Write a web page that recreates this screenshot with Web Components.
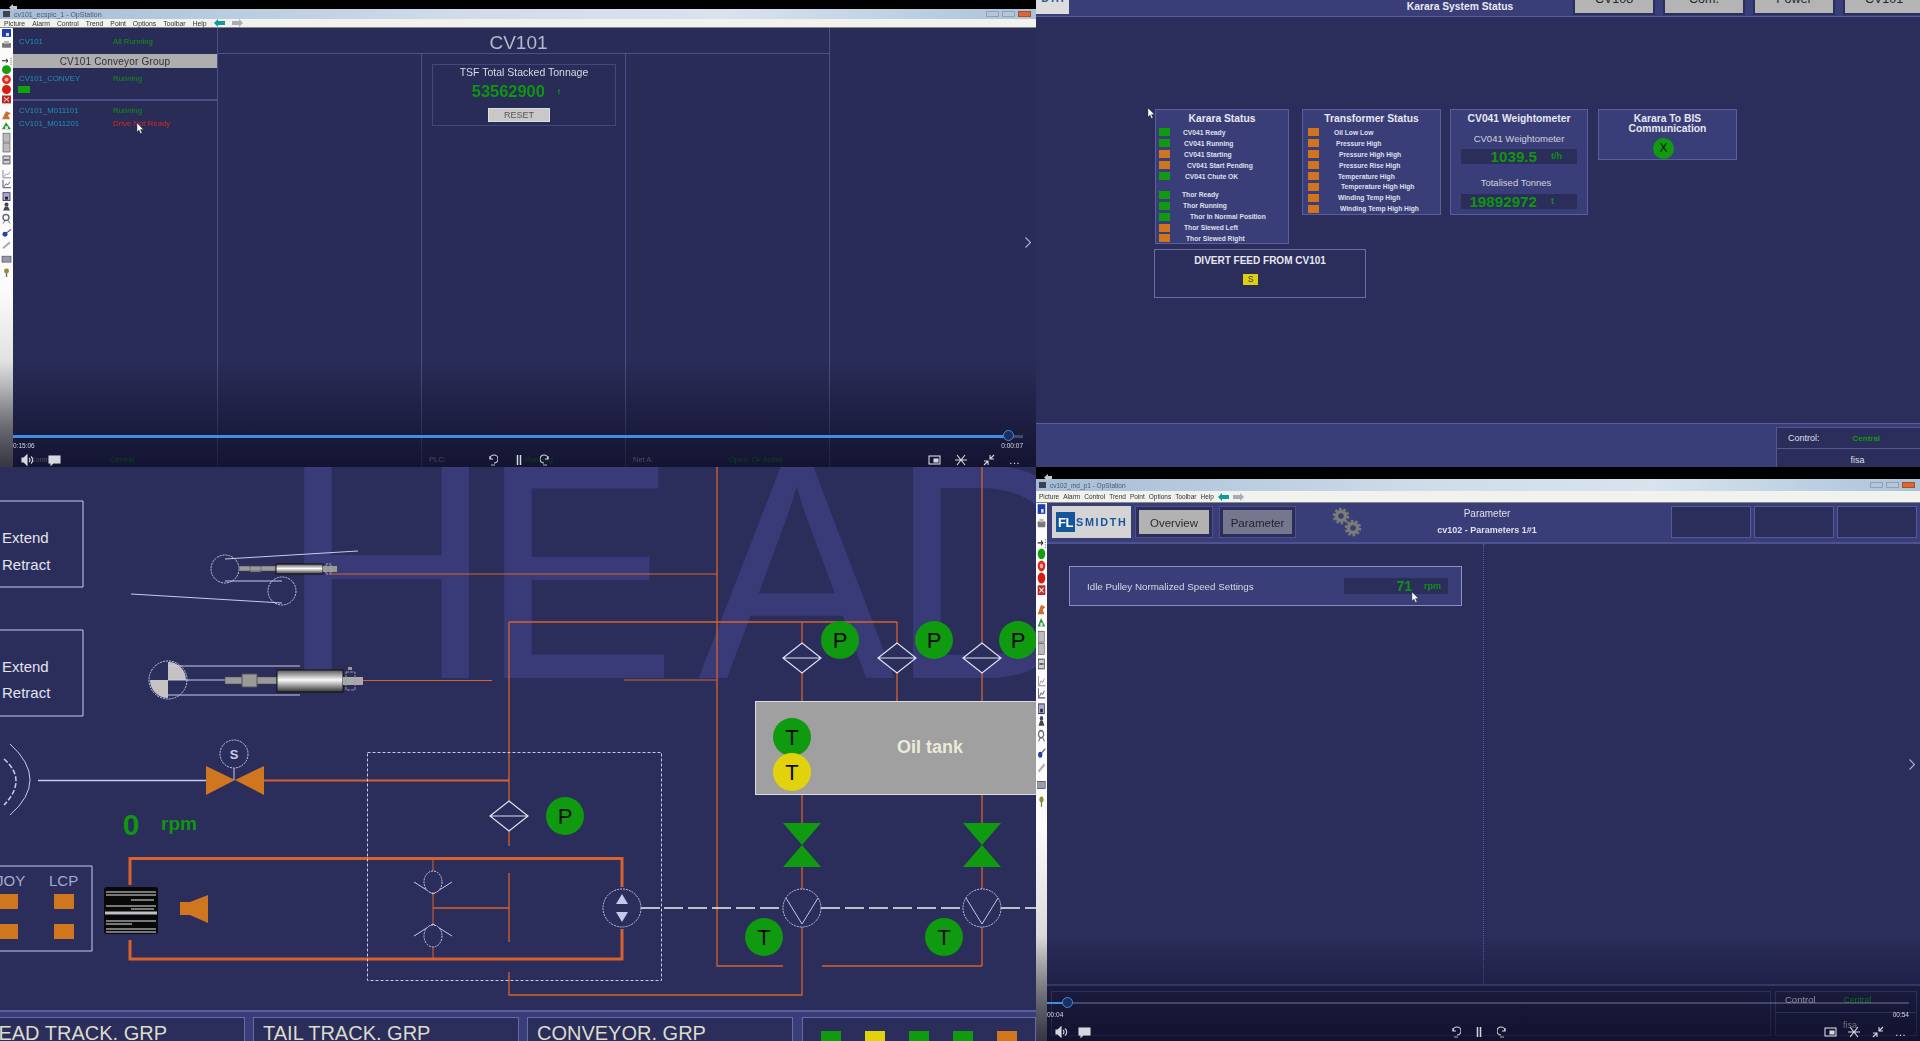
<!DOCTYPE html>
<html lang="en">
<head>
<meta charset="utf-8">
<title>OpStation</title>
<style>
  html, body { margin: 0; background: #000; overflow: hidden; }
  body { font-family: "Liberation Sans", Arial, sans-serif; }
</style>
</head>
<body>
<op-wall>
  <!-- top left -->
  <op-window title-text="cv101_ecspic_1 - OpStation" scale="1" menu-gap="7">
    <cv-overview></cv-overview>
    <video-bar slot="over" seek="996" start="0:15:06" end="0:00:07" inset="13" pad="16" wide></video-bar>
    <pointer-mark slot="over" style="left:137px;top:123px"></pointer-mark>
  </op-window>

  <!-- top right -->
  <karara-status></karara-status>

  <!-- bottom left -->
  <head-diagram></head-diagram>

  <!-- bottom right -->
  <op-window title-text="cv102_md_p1 - OpStation" scale="1.22" menu-gap="4">
    <cv-parameter></cv-parameter>
    <video-bar slot="over" seek="21" start="00:04" end="00:54" inset="11" pad="14"></video-bar>
    <pointer-mark slot="over" style="left:376px;top:125px"></pointer-mark>
  </op-window>
</op-wall>

<script>
const BASE = `:host{font-family:"Liberation Sans",Arial,sans-serif;box-sizing:border-box}*{box-sizing:border-box}`;

class OpWall extends HTMLElement {
  connectedCallback() {
    const root = this.attachShadow({ mode: "open" });
    root.innerHTML = `<style>
      :host{display:grid;grid-template-columns:1036px 884px;grid-template-rows:467px 574px;width:1920px;height:1041px;overflow:hidden}
      ::slotted(*){min-width:0;min-height:0}
    </style><slot></slot>`;
  }
}

class PointerMark extends HTMLElement {
  connectedCallback() {
    const root = this.attachShadow({ mode: "open" });
    root.innerHTML = `<style>:host{position:absolute;display:block;width:7px;height:11px}svg{display:block}</style>
      <svg width="7" height="11" viewBox="0 0 7 11"><path d="M0 0v9l2-2 1.500 3.500 1.500-.6L3.500 6.500H6.500z" fill="#fff" stroke="#222" stroke-width=".4"/></svg>`;
  }
}

// side strip of small OpStation tool icons, page y is stretched by the viewBox
const TOOL_ICONS = `
  <rect x="2" y="1" width="9" height="8" fill="#1c3fb0"/><rect x="6" y="5" width="3" height="3" fill="#ddd"/>
  <rect x="2" y="15" width="9" height="5" rx="1" fill="#777"/><rect x="4" y="13" width="5" height="3" fill="#bbb"/>
  <path d="M2 33h6M6 31l2 2-2 2" stroke="#222" fill="none"/><path d="M11 30v7" stroke="#555" stroke-dasharray="1 1"/>
  <circle cx="6.500" cy="42" r="4.500" fill="#12a012"/><circle cx="6.500" cy="52" r="4.500" fill="#e02c1c"/><circle cx="6.500" cy="52" r="2" fill="#f3b0a0"/>
  <circle cx="6.500" cy="62" r="4.500" fill="#d81c10"/><rect x="2" y="68" width="9" height="8" fill="#c02828"/><path d="M4 70l5 4M9 70l-5 4" stroke="#eee"/>
  <path d="M2 92l4-8 5 2-3 2 2 4z" fill="#c8702c"/><path d="M2 102l4-7 5 7z" fill="#2c9a3c"/><rect x="5" y="99" width="3" height="3" fill="#ddd"/>
  <rect x="3" y="106" width="7" height="9" fill="#bbb" stroke="#555" stroke-width=".6"/><rect x="3" y="116" width="7" height="9" fill="#bbb" stroke="#555" stroke-width=".6"/>
  <rect x="3" y="129" width="7" height="8" fill="#ccd" stroke="#444" stroke-width=".8"/><path d="M4 133h5" stroke="#222"/>
  <path d="M3 143v8h8" fill="none" stroke="#889"/><path d="M4 150l2-3 2 1 2-3" fill="none" stroke="#b9b"/>
  <path d="M3 153v8h8" fill="none" stroke="#556"/><path d="M4 160l2-3 2 1 2-3" fill="none" stroke="#669"/>
  <rect x="3" y="166" width="7" height="8" fill="#aac" stroke="#334" stroke-width=".8"/><rect x="5" y="170" width="3" height="3" fill="#224"/>
  <circle cx="6.500" cy="178" r="2" fill="#445"/><path d="M3 184l2-4h3l2 4z" fill="#445"/>
  <circle cx="6" cy="191" r="3" fill="none" stroke="#667" stroke-width="1.400"/><path d="M3 197l2-3M10 197l-2-3" stroke="#667"/>
  <circle cx="5" cy="208" r="2.500" fill="#1c3fb0"/><path d="M6 207l5-4" stroke="#555" stroke-width="1.200"/>
  <path d="M3 222l7-6" stroke="#aaa" stroke-width="2"/><rect x="2" y="230" width="9" height="6" fill="#99a" stroke="#445" stroke-width=".6"/>
  <circle cx="6.500" cy="245" r="2.500" fill="#998a30"/><path d="M6.500 247v4" stroke="#776" stroke-width="1.500"/>`;

class OpWindow extends HTMLElement {
  connectedCallback() {
    const scale = Number(this.getAttribute("scale"));
    const title = this.getAttribute("title-text");
    const gap = this.getAttribute("menu-gap");
    const small = scale > 1;
    const items = ["Picture", "Alarm", "Control", "Trend", "Point", "Options", "Toolbar", "Help"]
      .map((m) => `<span>${m}</span>`).join("");
    const root = this.attachShadow({ mode: "open" });
    root.innerHTML = `<style>${BASE}
      :host{display:flex;flex-direction:column;position:relative;overflow:hidden;background:#000;filter:blur(.35px)}
      .black{height:${small ? 12 : 9}px;background:#000;flex:none;padding:${small ? 7 : 4}px 0 0 ${small ? 8 : 9}px}
      .black svg{display:block;position:relative;z-index:2}
      .title{height:${small ? 12 : 10}px;flex:none;background:linear-gradient(90deg,#a4bcd6,#d0dcea 45%,#d8e3ee 70%,#a9c2da);display:flex;align-items:center;padding-left:3px;gap:4px;font-size:${small ? 6.500 : 7}px;color:#4a5a70}
      .title i{display:block;width:7px;height:6px;background:#3c4250;flex:none}
      .winbtn{margin-left:auto;display:flex;gap:3px;padding-right:5px}
      .winbtn b{display:block;width:13px;height:6px;background:#b7c6d6;border:1px solid #8ea2b8}
      .winbtn b:last-child{background:#d8683a;border-color:#b84a20}
      .menu{height:${small ? 12 : 9}px;flex:none;background:#f1f1ed;border-bottom:1px solid #888;display:flex;align-items:center;gap:${gap}px;padding-left:${small ? 3 : 4}px;font-size:${small ? 6.500 : 6.800}px;color:#333}
      .work{flex:1;display:flex;min-height:0}
      .tools{width:${small ? 11 : 13}px;flex:none;background:linear-gradient(#fbfbfb 60%,#d8d8d8 82%,#8e8e8e)}
      .tools svg{display:block;width:100%;height:${Math.round(250 * scale)}px}
      .main{flex:1;min-width:0;display:flex}
      ::slotted(cv-overview),::slotted(cv-parameter){flex:1}
    </style>
    <div class="black"><svg width="8" height="7" viewBox="0 0 8 7"><path d="M4 0L0 3.500L4 7V5H8V2H4z" fill="#c8c8c8"/></svg></div>
    <div class="title"><i></i><span>${title}</span><div class="winbtn"><b></b><b></b><b></b></div></div>
    <div class="menu">${items}
      <svg width="11" height="8" viewBox="0 0 11 8"><path d="M0 4l4-4v2h7v4H4v2z" fill="#109aa0"/></svg>
      <svg width="11" height="8" viewBox="0 0 11 8"><path d="M11 4L7 0v2H0v4h7v2z" fill="#aab"/></svg>
    </div>
    <div class="work">
      <div class="tools"><svg viewBox="0 0 13 252" preserveAspectRatio="none">${TOOL_ICONS}</svg></div>
      <div class="main"><slot></slot></div>
    </div>
    <slot name="over"></slot>`;
  }
}

class VideoBar extends HTMLElement {
  connectedCallback() {
    const seek = this.getAttribute("seek");
    const inset = this.getAttribute("inset");
    const pad = this.getAttribute("pad");
    const wide = this.hasAttribute("wide");
    const icon = (d, w = 16) => `<svg width="${w}" height="12" viewBox="0 0 ${w} 12" fill="none" stroke="#d6d8e0" stroke-width="1.100">${d}</svg>`;
    const root = this.attachShadow({ mode: "open" });
    root.innerHTML = `<style>${BASE}
      :host{position:absolute;inset:0;display:flex;flex-direction:column;justify-content:flex-end;pointer-events:none;color:#dde}
      .chev{position:absolute;right:5px;top:calc(50% + ${wide ? 3 : 5}px)}
      .scrim{background:linear-gradient(rgba(8,8,30,0),rgba(8,8,30,.38) 55%,rgba(8,8,30,.66));height:106px;display:flex;flex-direction:column;justify-content:flex-end;padding:0 ${inset}px ${wide ? 0 : 2}px}
      .line{position:relative;height:${wide ? 3 : 2}px;background:rgba(190,190,220,.28);margin-bottom:${wide ? 4 : 7}px}
      .line b{position:absolute;left:0;top:0;bottom:0;width:${seek}px;background:#3f8fdc}
      .line i{position:absolute;left:${seek}px;top:-5px;width:11px;height:11px;border-radius:50%;border:1.500px solid #3f8fdc;background:#1c2f60;margin-left:-6px}
      .time{display:flex;justify-content:space-between;font-size:6.500px;margin-bottom:${wide ? 3 : 6}px;color:#d6d8e0}
      .row{display:grid;grid-template-columns:1fr auto 1fr;align-items:center;height:15px;padding:0 ${pad - inset}px 0 ${pad - inset + 5}px}
      .grp{display:flex;align-items:center;gap:${wide ? 14 : 10}px}
      .c{gap:${wide ? 18 : 15}px;padding-right:4px}.r{justify-content:flex-end;gap:${wide ? 13.500 : 10}px}
    </style>
    <svg class="chev" width="6" height="11" viewBox="0 0 6 11"><path d="M.5.5l5 5-5 5" fill="none" stroke="#b0b2d0" stroke-width="1.100"/></svg>
    <div class="scrim">
      <div class="line"><b></b><i></i></div>
      <div class="time"><span>${this.getAttribute("start")}</span><span>${this.getAttribute("end")}</span></div>
      <div class="row">
        <div class="grp">
          ${icon('<path d="M1 4h2l3-3v10L3 8H1z" fill="#d6d8e0"/><path d="M8 4q2 2 0 4M10 2.500q3.500 3.500 0 7"/>', 13)}
          ${icon('<rect x="1" y="2" width="11" height="7" fill="#d6d8e0"/><path d="M3 9v2l2-2" fill="#d6d8e0"/>', 13)}
        </div>
        <div class="grp c">
          ${icon('<path d="M3 5a4 4 0 1 1 4 4"/><path d="M3 2v3h3"/><path d="M5 10v2M7 10v2" stroke-width=".8"/>', 11)}
          ${icon('<path d="M1.500 1v10M4.500 1v10" stroke-width="1.500"/>', 6)}
          ${icon('<path d="M8 5a4 4 0 1 0-4 4"/><path d="M8 2v3H5"/><path d="M4 10v2M6 10v2" stroke-width=".8"/>', 11)}
        </div>
        <div class="grp r">
          ${icon('<rect x="1" y="2" width="11" height="8"/><rect x="6" y="5" width="4" height="3" fill="#d6d8e0"/>', 13)}
          ${icon('<path d="M3 1l4 5 4-5M3 11l4-5 4 5M1 6h12"/>', 14)}
          ${icon('<path d="M2 11l4-4M12 1L8 5M2 7h4v4M8 1v4h4"/>', 14)}
          <span style="font-size:11px;line-height:8px;letter-spacing:.5px">...</span>
        </div>
      </div>
    </div>`;
  }
}

class CvOverview extends HTMLElement {
  connectedCallback() {
    const row = (a, b, c = "#0f950f") => `<div class="row"><span class="tag">${a}</span><span style="color:${c}">${b}</span></div>`;
    const root = this.attachShadow({ mode: "open" });
    root.innerHTML = `<style>${BASE}
      :host{display:flex;background:#2a2c58;min-width:0}
      .side{width:205px;flex:none;border-right:1px solid #4c4f8a;display:flex;flex-direction:column}
      .row{display:grid;grid-template-columns:94px 1fr;font-size:7.800px;padding-left:6px;height:13px;align-items:center}
      .tag{color:#1e8fb8}
      .head{height:26px;display:flex;align-items:center}
      .head .row{width:100%;height:auto}
      .bar{height:14px;background:#aeaeae;color:#303038;font-size:10px;text-align:center;line-height:15px;letter-spacing:.2px}
      .grp{height:33px;border-bottom:2px solid #4c4f8a;padding-top:4px}
      .grp i{display:block;width:12px;height:7px;background:#10a010;margin:1px 0 0 5px}
      .lst{padding-top:3px;flex:1}
      .foot,.cell{height:15px;font-size:7.500px;display:grid;align-items:center;color:#b0b2c8}
      .foot{grid-template-columns:80px 1fr;padding-left:17px}
      .right{flex:1;display:grid;grid-template-columns:204px 204px 204px 1fr;grid-template-rows:26px 1fr 15px;min-width:0}
      .title{grid-column:1/span 3;border-bottom:1px solid #4c4f8a;border-right:1px solid #4c4f8a;color:#b4b8c8;font-size:19px;text-align:center;line-height:30px;padding-right:10px}
      .col{border-right:1px solid #4c4f8a;min-height:0}
      .cell{border-right:1px solid #4c4f8a;grid-template-columns:96px 1fr;padding-left:7px}
      .g{color:#0f950f}
      .tsf{margin:10px 0 0 10px;width:184px;height:62px;border:1px solid #44477f;display:flex;flex-direction:column;align-items:center;color:#d8dae4;padding-right:10px}
      .tsf h4{margin:1px 0 0;font-weight:400;font-size:10.500px;line-height:12px;padding-left:10px}
      .num{display:flex;align-items:center;height:24px;margin-top:1px;color:#0f950f;font-weight:700;font-size:16.400px;gap:13px;padding-right:6px}
      .num small{font-size:7px;font-weight:700}
      button{font:9px "Liberation Sans",Arial,sans-serif;color:#555;background:#c8c8c8;border:1px solid #ddd;width:62px;height:14px;padding:0;margin-top:5px}
    </style>
    <div class="side">
      <div class="head">${row("CV101", "All Running")}</div>
      <div class="bar">CV101 Conveyor Group</div>
      <div class="grp">${row("CV101_CONVEY", "Running")}<i></i></div>
      <div class="lst">${row("CV101_M011101", "Running")}${row("CV101_M011201", "Drive Not Ready", "#d42820")}</div>
      <div class="foot"><span>Control:</span><span class="g">Central</span></div>
    </div>
    <div class="right">
      <div class="title">CV101</div>
      <div></div>
      <div class="col"></div>
      <div class="col"><div class="tsf"><h4>TSF Total Stacked Tonnage</h4>
        <div class="num"><span>53562900</span><small>t</small></div><button>RESET</button></div></div>
      <div class="col"></div>
      <div></div>
      <div class="cell"></div>
      <div class="cell"><span>PLC:</span><span class="g">Running</span></div>
      <div class="cell"><span>Net A:</span><span class="g">Open: Ok Active</span></div>
      <div></div>
    </div>`;
  }
}

class StatusRow extends HTMLElement {
  connectedCallback() {
    const root = this.attachShadow({ mode: "open" });
    const c = this.getAttribute("c") === "g" ? "#0f9a0f" : "#cf741f";
    root.innerHTML = `<style>${BASE}
      :host{display:flex;align-items:center;height:10.900px;font-size:6.700px;font-weight:700;color:#dfe0ea;white-space:nowrap}
      i{display:block;width:11px;height:8px;background:${c};flex:none}
      span{padding-left:${this.getAttribute("x")}px}
    </style><i></i><span><slot></slot></span>`;
  }
}

class HmiPanel extends HTMLElement {
  connectedCallback() {
    const root = this.attachShadow({ mode: "open" });
    root.innerHTML = `<style>${BASE}
      :host{display:block;background:#3a3e78;border:1px solid #5a5e9c;color:#e6e7ef;flex:none}
      h3{margin:0;text-align:center;font-size:10.300px;line-height:9.500px;font-weight:700;padding-top:4px}
    </style><h3>${this.getAttribute("heading")}</h3><slot></slot>`;
  }
}

class KararaStatus extends HTMLElement {
  connectedCallback() {
    const root = this.attachShadow({ mode: "open" });
    const rows = (list) => list.map(([c, x, t]) => t ? `<status-row c="${c}" x="${x}">${t}</status-row>` : `<div style="height:8px"></div>`).join("");
    root.innerHTML = `<style>${BASE}
      :host{display:flex;flex-direction:column;background:#2b2d5b;overflow:hidden;position:relative}
      .bar{height:17px;flex:none;background:#3a3e78;border-bottom:1px solid #585c9a;display:flex;align-items:flex-end;overflow:hidden;padding-bottom:3px}
      .logo{width:33px;height:14px;align-self:flex-start;background:#dcdcdc;overflow:hidden;display:flex;align-items:flex-end;justify-content:center;color:#1a5fa0;font-weight:700;font-size:11px;line-height:11px;padding-bottom:10px;flex:none}
      .ttl{flex:1;text-align:center;color:#e8e8f0;font-size:10.300px;font-weight:700;line-height:13px;align-self:center;margin-top:0;padding-left:276px;white-space:nowrap}
      .btns{width:345px;flex:none;display:flex;gap:12px}
      .btns b{flex:none;width:78px;height:22px;background:#b4b4b4;outline:2px solid #2c2e5e;color:#26262e;font-weight:400;font-size:12.500px;overflow:hidden;display:flex;align-items:flex-end;justify-content:center;line-height:12px;padding-bottom:8px}
      .desk{flex:1;padding:92px 0 0 119px;display:flex;flex-direction:column;gap:5px}
      .line{display:flex;align-items:flex-start}
      .karara{width:134px;height:135px;margin-right:13px}
      .trafo{width:139px;height:106px;margin-right:9px}
      .weigh{width:138px;height:106px;margin-right:10px}
      .bis{width:139px;height:51px}
      .list{padding:3.500px 0 0 3px}
      .trafo .list{padding-left:5px}
      .sub{font-size:9.500px;text-align:center;line-height:12px;color:#d0d2de;font-weight:400}
      .read{margin:4px 10px 0;height:15px;background:#2b2d5b;display:flex;align-items:center;color:#0f950f;font-weight:700;font-size:15.200px}
      .read b{width:76px;text-align:right;flex:none}
      .read small{font-size:9px;padding-left:14px;font-weight:700;color:#10901a}
      .dot{width:21px;height:21px;border-radius:50%;background:#0f9a0f;color:#111;margin:5px 0 0 54px;font-size:12px;line-height:21px;text-align:center}
      .divert{width:212px;height:49px;background:#2b2d5b;border:1px solid #6a6da6;margin-left:-1px;color:#e8e8f0;font-weight:700;font-size:10px;text-align:center;padding-top:5px;line-height:12px}
      .s{width:15px;height:11px;background:#e0cf10;color:#44401a;font-size:8.500px;line-height:11px;font-weight:400;margin:7px 0 0 88px;text-align:center}
      .foot{height:44px;flex:none;background:#3a3e78;border-top:1px solid #585c9a;display:flex;justify-content:flex-end;padding-top:3px}
      .ctl{width:144px;background:#2b2d5b;border:1px solid #555890;border-right:0;border-bottom:0;font-size:9px;color:#dfe0ea}
      .ctl div{height:21px;display:flex;align-items:center;padding-left:11px;border-bottom:1px solid #555890}
      .ctl em{font-style:normal;color:#0f9a0f;font-size:8px;font-weight:700;padding-left:33px}
      .ctl p{margin:0;text-align:center;line-height:22px;font-weight:400;padding-left:18px}
    </style>
    <div class="bar">
      <div class="logo">DTH</div>
      <div class="ttl">Karara System Status</div>
      <div class="btns"><b>CV108</b><b>Com.</b><b>Power</b><b>CV101</b></div>
    </div>
    <div class="desk">
      <div class="line">
        <hmi-panel class="karara" heading="Karara Status"><div class="list">${rows([
          ["g", 13, "CV041 Ready"], ["g", 14, "CV041 Running"], ["o", 14, "CV041 Starting"], ["o", 17, "CV041 Start Pending"], ["g", 15, "CV041 Chute OK"], [],
          ["g", 12, "Thor Ready"], ["g", 13, "Thor Running"], ["g", 20, "Thor In Normal Position"], ["o", 14, "Thor Slewed Left"], ["o", 16, "Thor Slewed Right"]])}</div></hmi-panel>
        <hmi-panel class="trafo" heading="Transformer Status"><div class="list">${rows([
          ["o", 15, "Oil Low Low"], ["o", 17, "Pressure High"], ["o", 20, "Pressure High High"], ["o", 20, "Pressure Rise High"], ["o", 19, "Temperature High"],
          ["o", 22, "Temperature High High"], ["o", 19, "Winding Temp High"], ["o", 21, "Winding Temp High High"]])}</div></hmi-panel>
        <hmi-panel class="weigh" heading="CV041 Weightometer">
          <div class="sub" style="padding-top:9px">CV041 Weightometer</div>
          <div class="read"><b>1039.5</b><small>t/h</small></div>
          <div class="sub" style="padding-top:13px;padding-right:6px">Totalised Tonnes</div>
          <div class="read" style="margin-top:5px"><b>19892972</b><small>t</small></div>
        </hmi-panel>
        <hmi-panel class="bis" heading="Karara To BIS<br>Communication"><div class="dot">X</div></hmi-panel>
      </div>
      <div class="divert">DIVERT FEED FROM CV101<div class="s">S</div></div>
    </div>
    <div class="foot"><div class="ctl"><div><span>Control:</span><em>Central</em></div><p>fisa</p></div></div>
    <pointer-mark style="left:112px;top:108px"></pointer-mark>`;
  }
}

// hydraulic schematic: nodes sit at their own place on the canvas
const pin = (x, y, l, fill = "#0f9a0f") => `<circle cx="${x}" cy="${y}" r="19" fill="${fill}"/><text x="${x}" y="${y + 8}" text-anchor="middle" font-size="22" fill="#0b0b0b">${l}</text>`;
const filter = (x, y) => `<path d="M${x - 19} ${y}L${x} ${y - 15}L${x + 19} ${y}L${x} ${y + 15}Z M${x - 19} ${y}H${x + 19}" fill="#2b2d5b" stroke="#dfe0f4" stroke-width="1.200"/>`;
const hourglass = (x) => `<path d="M${x - 19} 824H${x + 19}L${x} 846L${x + 19} 868H${x - 19}L${x} 846Z" fill="#0f9a0f"/>`;
const pumpV = (x) => `<circle cx="${x}" cy="909" r="19" fill="#2b2d5b" stroke="#c4c6e8" stroke-dasharray="2 1"/><path d="M${x - 16} 899L${x} 925L${x + 16} 899" fill="none" stroke="#c4c6e8"/>`;

class HeadDiagram extends HTMLElement {
  connectedCallback() {
    const root = this.attachShadow({ mode: "open" });
    const or = `fill="none" stroke="#d8622e"`;
    const wh = `fill="none" stroke="#c9cbea"`;
    root.innerHTML = `<style>${BASE}
      :host{display:flex;flex-direction:column;background:#2b2d5b;overflow:hidden}
      svg{display:block;flex:none;font-family:"Liberation Sans",Arial,sans-serif}
      .foot{height:31px;flex:none;background:#3a3e78;border-top:2px solid #5a5e9c;display:flex;gap:8px;padding-top:5px;overflow:hidden}
      .t{flex:none;background:#2b2d5b;border:1px solid #666aa8;border-bottom:0;height:30px;font-size:20px;line-height:24px;color:#dcdccc;padding:3px 0 0 9px;white-space:nowrap}
      .sq{display:flex;gap:24px;padding:13px 0 0 18px;width:234px;margin-left:1px}
      .sq i{display:block;flex:none;width:20px;height:20px}
    </style>
    <svg width="1036" height="543" viewBox="0 468 1036 543">
      <defs>
        <linearGradient id="steel" x1="0" y1="0" x2="0" y2="1"><stop offset="0" stop-color="#555"/><stop offset=".45" stop-color="#fafafa"/><stop offset="1" stop-color="#333"/></linearGradient>
      </defs>
      <text transform="translate(0 679) scale(1 1.05) translate(0 -679)" y="679" x="280 480 698 889" font-size="295" fill="#383b77">HEAD</text>

      <path d="M-2 502H83V588H-2M-2 631H83V717H-2" ${wh} stroke="#8d90c4"/>
      <g fill="#e4e4ee" font-size="15"><text x="2" y="544">Extend</text><text x="2" y="571">Retract</text><text x="2" y="673">Extend</text><text x="2" y="699">Retract</text></g>

      <g ${wh}><circle cx="225" cy="570" r="14" stroke-dasharray="2 1"/><circle cx="282" cy="592" r="14" stroke-dasharray="2 1"/>
        <path d="M225 560L358 552M225 582H282M131 595L282 604"/></g>
      <path d="M239 567h37v5h-37zM250 567h11v6h-11z" fill="#9a9a9a" stroke="#444" stroke-width=".5"/>
      <rect x="276" y="565" width="47" height="10" fill="url(#steel)" stroke="#111"/>
      <rect x="323" y="567" width="14" height="6" fill="#999"/><rect x="326" y="565" width="5" height="10" fill="none" stroke="#aaa" stroke-dasharray="2 1"/>
      <path d="M330 575H717" ${or}/>

      <circle cx="168" cy="681" r="19" ${wh} stroke-dasharray="2 1"/>
      <path d="M168 681V663A18 18 0 0 1 186 681ZM168 681V699A18 18 0 0 1 150 681Z" fill="#c3c3c3"/>
      <path d="M168 667H300M168 681H225M168 696H300" ${wh}/>
      <path d="M225 678h52v7h-52z" fill="#9a9a9a" stroke="#444" stroke-width=".5"/><path d="M242 675h15v13h-15z" fill="#9a9a9a" stroke="#555"/>
      <rect x="277" y="671" width="66" height="22" fill="url(#steel)" stroke="#111"/>
      <rect x="343" y="678" width="20" height="8" fill="#aaa"/><rect x="346" y="673" width="9" height="18" fill="none" stroke="#999" stroke-dasharray="3 1"/><rect x="348" y="668" width="4" height="3" fill="#999"/>
      <path d="M363 681.500H492M624 681H717" ${or}/>

      <path d="M717 467V967H783M822 967H982M982 467V702M802 623V702M897 623V702M509 781V847M509 874V943M509 973V996H802V928M509 623H897M509 623V781M433 909H509" ${or} stroke-width="1.300"/>
      <path d="M802 796V824M802 868V890M982 796V824M982 868V890M982 928V967" ${or} stroke-width="1.300"/>
      <path d="M264 781.500H509" ${or} stroke-width="1.800"/>
      <path d="M130 886V859.500H622V888M622 930V960H130V941" ${or} stroke-width="3"/>
      <path d="M433 859V960" ${or}/>

      <rect x="367.500" y="753.500" width="294" height="228" ${wh} stroke="#dfe0f4" stroke-dasharray="3 2"/>
      <path d="M38 781.500H206" ${wh} stroke-width="1.500"/>
      <path d="M10 745Q50 781 10 816" ${wh}/><path d="M4 760Q28 781 4 806" ${wh} stroke-width="1.500" stroke-dasharray="5 2"/>
      <path d="M206 767L235 781L206 796ZM264 767L235 781L264 796Z" fill="#d0761e"/>
      <path d="M234 769V781" ${wh}/>
      <circle cx="234" cy="755" r="14" fill="#2b2d5b" stroke="#c9cbea" stroke-dasharray="2 1"/>
      <text x="234" y="760" text-anchor="middle" font-size="13" font-weight="700" fill="#c9cbea">S</text>
      ${filter(509, 817)}
      ${pin(565, 817, "P")}
      <text x="131" y="836" text-anchor="middle" font-size="30" font-weight="700" fill="#0f950f">0</text>
      <text x="161" y="831" font-size="19" font-weight="700" fill="#0f950f">rpm</text>

      <path d="M-2 867H92V952H-2" ${wh} stroke="#8d90c4"/>
      <text x="-4" y="887" font-size="15" fill="#a8aac8">JOY</text><text x="49" y="887" font-size="15" fill="#a8aac8">LCP</text>
      <g fill="#d0761e"><rect x="-2" y="895" width="20" height="15"/><rect x="-2" y="925" width="20" height="15"/><rect x="54" y="895" width="20" height="15"/><rect x="54" y="925" width="20" height="15"/></g>

      <rect x="104" y="888" width="54" height="47" rx="3" fill="#080808"/>
      <path d="M106 893H156M106 896H156M131 901H154M106 907H156M131 910H154M106 922H156M106 925H132M106 930H156M106 933H156" stroke="#e8e8e8" stroke-width="1"/>
      <path d="M105 914H157" stroke="#c0c0c8" stroke-width="3"/>
      <path d="M180 903H190L208 896V924L190 916H180Z" fill="#d0761e"/>

      <path d="M414 883L433 895L452 883M414 937L433 925L452 937" ${wh}/>
      <ellipse cx="433" cy="883" rx="9" ry="11" fill="#2b2d5b" stroke="#c9cbea" stroke-dasharray="2 1"/>
      <ellipse cx="433" cy="937" rx="9" ry="11" fill="#2b2d5b" stroke="#c9cbea" stroke-dasharray="2 1"/>
      <path d="M641 909H660" stroke="#f0f0f0" stroke-width="1.500"/>
      <path d="M664 909H783M821 909H963M1001 909H1036" stroke="#f0f0f0" stroke-width="1.500" stroke-dasharray="19 5"/>
      <circle cx="622" cy="909" r="19" fill="#2b2d5b" stroke="#c4c6e8" stroke-dasharray="2 1"/>
      <path d="M622 895L628 905H616ZM622 923L628 913H616Z" fill="#c4c6ea"/>

      <rect x="755.500" y="702.500" width="285" height="93" fill="#a0a0a0" stroke="#dcdce0"/>
      <text x="930" y="754" text-anchor="middle" font-size="18" font-weight="700" fill="#ecead8">Oil tank</text>
      ${pin(792, 738, "T")}${pin(792, 773, "T", "#e2d20e")}
      ${filter(802, 659)}${filter(897, 659)}${filter(982, 659)}
      ${pin(840, 641, "P")}${pin(934, 641, "P")}${pin(1018, 641, "P")}
      ${hourglass(802)}${hourglass(982)}
      ${pumpV(802)}${pumpV(982)}
      ${pin(764, 938, "T")}${pin(944, 938, "T")}
    </svg>
    <div class="foot">
      <div class="t" style="margin-left:-26px;width:271px">HEAD TRACK. GRP</div>
      <div class="t" style="width:266px">TAIL TRACK. GRP</div>
      <div class="t" style="width:266px">CONVEYOR. GRP</div>
      <div class="t sq"><i style="background:#0f9a0f"></i><i style="background:#e2d20e"></i><i style="background:#0f9a0f"></i><i style="background:#0f9a0f"></i><i style="background:#d0761e"></i></div>
    </div>`;
  }
}

class CvParameter extends HTMLElement {
  connectedCallback() {
    const root = this.attachShadow({ mode: "open" });
    root.innerHTML = `<style>${BASE}
      :host{display:flex;flex-direction:column;background:#2b2d5b;min-width:0}
      .top{height:41px;flex:none;background:#3a3e78;border-bottom:2px solid #4f5290;display:flex;align-items:center;padding-left:5px;padding-bottom:1px}
      .logo{width:79px;height:32px;background:#d4d4d4;display:flex;align-items:center;padding-left:4px;flex:none}
      .logo b{display:block;background:#15559c;color:#fff;font-size:13px;width:19px;height:20px;line-height:21px;text-align:center;letter-spacing:-.5px}
      .logo span{color:#15559c;font-weight:700;font-size:10.800px;letter-spacing:1.700px;padding-left:1px}
      .nav{margin-left:4px;width:78px;height:32px;background:#2b2d5b;border:1px solid #4c4f8a;padding:3px;flex:none;display:flex}
      .nav span{flex:1;background:#b2b2b2;color:#2a2a32;font-size:11.500px;text-align:center;line-height:26px}
      .nav.on{margin-left:6px;width:77px}
      .nav.on span{background:#75778e;color:#222230}
      .gear{margin-left:36px;flex:none}
      .cap{width:150px;margin-left:50px;text-align:center;color:#dfe0ea;font-size:10px;line-height:17px;flex:none}
      .cap b{display:block;font-size:9px}
      .empty{display:flex;gap:3px;margin-left:109px}
      .empty i{display:block;width:80px;height:32px;background:#2b2d5b;border:1px solid #55589a}
      .mid{flex:1;position:relative;min-height:0;display:flex;padding:22px 0 0 22px}
      .mid::after{content:"";position:absolute;left:436px;top:0;bottom:0;border-left:1px dotted #5a5d96}
      .speed{width:393px;height:40px;background:#3a3e78;border:1px solid #8c8fc0;display:flex;align-items:center;padding-left:17px;font-size:9.800px;color:#d6d8e4;flex:none}
      .val{margin-left:auto;margin-right:13px;width:104px;height:16px;background:#2b2d5b;display:flex;align-items:center;justify-content:flex-end;padding-right:7px;color:#0f950f;font-weight:700}
      .val b{font-size:14px;padding-right:12px}.val small{font-size:9px}
      .foot{height:57px;flex:none;border-top:2px solid #4a4d88;background:#24264f;display:flex;gap:4px;padding:5px 3px 5px 4px}
      .foot > div{border:1px solid #45487e}
      .a{width:720px}
      .b{flex:1;font-size:9.500px;color:#e6e8f4;padding:2px 0 0 9px}
      .b em{font-style:normal;color:#17b017;font-size:8.500px;padding-left:28px}
      .b p{margin:7px 0 0 -9px;padding:7px 0 0 67px;font-size:9px;border-top:1px solid #55589a}
    </style>
    <div class="top">
      <div class="logo"><b>FL</b><span>SMIDTH</span></div>
      <div class="nav"><span>Overview</span></div>
      <div class="nav on"><span>Parameter</span></div>
      <svg class="gear" width="30" height="30" viewBox="0 0 30 30">
        <g fill="none" stroke="#7c7c74"><circle cx="9" cy="9" r="4.500" stroke-width="3.500"/><circle cx="9" cy="9" r="7" stroke-width="2.500" stroke-dasharray="2.500 1.900"/>
        <circle cx="21" cy="21" r="4.500" stroke-width="3.500"/><circle cx="21" cy="21" r="7" stroke-width="2.500" stroke-dasharray="2.500 1.900"/></g>
      </svg>
      <div class="cap">Parameter<b>cv102 - Parameters 1#1</b></div>
      <div class="empty"><i></i><i></i><i></i></div>
    </div>
    <div class="mid">
      <div class="speed"><span>Idle Pulley Normalized Speed Settings</span><div class="val"><b>71</b><small>rpm</small></div></div>
    </div>
    <div class="foot"><div class="a"></div><div class="b"><span>Control</span><em>Central</em><p>fisa</p></div></div>`;
  }
}

customElements.define("op-wall", OpWall);
customElements.define("pointer-mark", PointerMark);
customElements.define("op-window", OpWindow);
customElements.define("video-bar", VideoBar);
customElements.define("cv-overview", CvOverview);
customElements.define("status-row", StatusRow);
customElements.define("hmi-panel", HmiPanel);
customElements.define("karara-status", KararaStatus);
customElements.define("head-diagram", HeadDiagram);
customElements.define("cv-parameter", CvParameter);
</script>
</body>
</html>
